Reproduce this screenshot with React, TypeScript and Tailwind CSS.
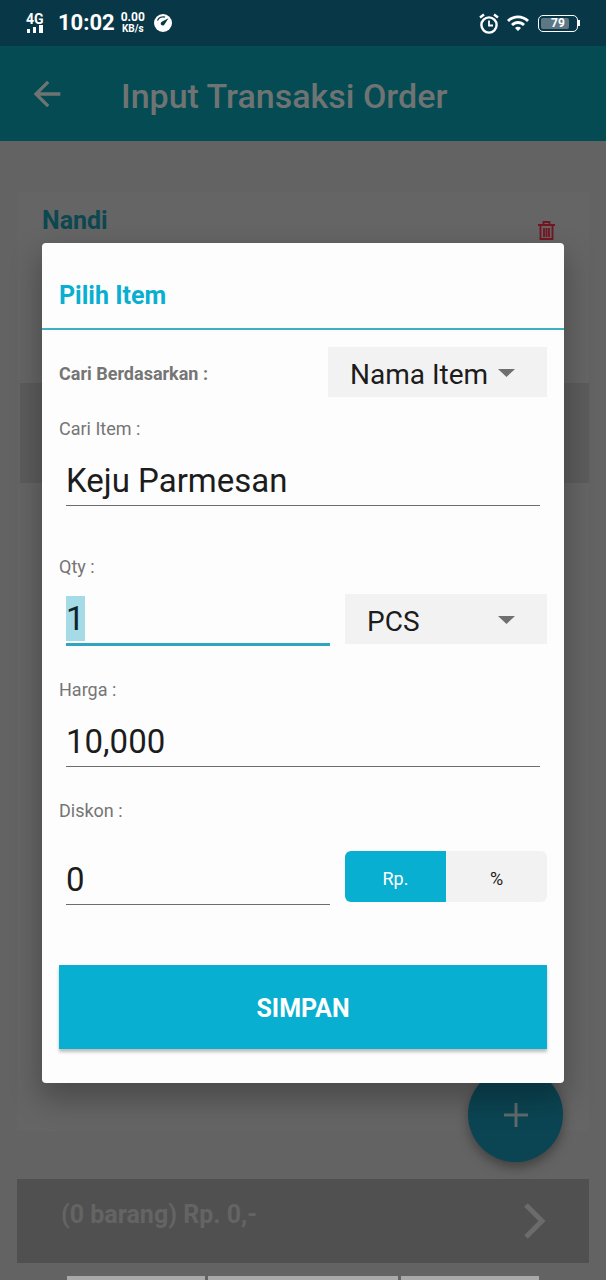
import { useEffect, useRef, useState } from "react";
import type { ReactNode } from "react";
import { MdArrowBack, MdWifi } from "react-icons/md";

function StatusBar() {
    return (
        <div className="flex h-[46px] items-center justify-between bg-[#083848] px-[26px] text-white">
            <div className="flex items-center">
                <div className="flex w-6 flex-col items-start">
                    <span className="text-[14px] font-bold leading-3">4G</span>
                    <svg width="18" height="8" viewBox="0 0 18 8" fill="currentColor">
                        <rect x="1" y="4" width="3" height="4" />
                        <rect x="7" y="2" width="3" height="6" />
                        <rect x="13" y="0" width="4" height="8" />
                    </svg>
                </div>
                <span className="ml-2 text-[22px] font-bold leading-7">10:02</span>
                <div className="ml-1.5 flex flex-col text-center font-bold">
                    <span className="text-[12px] leading-[11px]">0.00</span>
                    <span className="text-[10px] leading-[11px]">KB/s</span>
                </div>
                <svg className="ml-2" width="20" height="20" viewBox="0 0 20 20">
                    <circle cx="10" cy="10" r="9" fill="#fff" />
                    <path d="M4.5 7.5A6.2 6.2 0 0 1 12 4.2" fill="none" stroke="#083848" strokeWidth="1.3" />
                    <path d="M15.5 5.2 11.6 11.2A2 2 0 1 1 8.8 8.8Z" fill="#083848" />
                </svg>
            </div>
            <div className="flex items-center">
                <svg width="20" height="21" viewBox="0 0 20 21" fill="none" stroke="currentColor" strokeWidth="2.4">
                    <circle cx="10" cy="12" r="7.6" />
                    <path d="M1 4.5 5 1.5M19 4.5 15 1.5" />
                    <path d="M10 7.5V12.5H14" strokeWidth="1.8" />
                </svg>
                <MdWifi size={24} className="ml-[7px]" />
                <div className="ml-2 flex items-center">
                    <div className="relative flex h-[17px] w-10 items-center justify-center rounded-[5px] border border-white">
                        <div className="absolute inset-y-0.5 left-0.5 w-7 rounded-xs bg-[#5d7884]" />
                        <span className="relative text-[12px] font-bold leading-3">79</span>
                    </div>
                    <div className="h-1.5 w-0.5 bg-white" />
                </div>
            </div>
        </div>
    );
}

type FieldProps = { id: string; label: string; className: string; children: ReactNode };

function Field({ id, label, className, children }: FieldProps) {
    return (
        <div className={className}>
            <label htmlFor={id} className="block text-[18px] leading-6 text-[#757575]">{label}</label>
            {children}
        </div>
    );
}

const inputStyle =
    "block w-full min-w-0 bg-transparent pt-[17px] pb-0.5 text-[33px] leading-[45px] text-[#1c1c1c] outline-none rounded-none selection:bg-[#a5dbe6] selection:text-[#10242c]";

type DropdownProps = { id: string; label: string; options: string[]; className: string };

function Dropdown({ id, label, options, className }: DropdownProps) {
    return (
        <div className={`relative ${className}`}>
            <select
                id={id}
                aria-label={label}
                className="h-[50px] w-full appearance-none rounded-none bg-[#f2f2f2] pl-[22px] pt-1.5 text-[28px] leading-9 text-[#1c1c1c] outline-none"
            >
                {options.map((o) => (
                    <option key={o}>{o}</option>
                ))}
            </select>
            <svg className="pointer-events-none absolute right-8 top-[22px]" width="17" height="8" viewBox="0 0 17 8">
                <path d="M0 0H17L8.5 8Z" fill="#6f6f6f" />
            </svg>
        </div>
    );
}

function ItemDialog() {
    const qtyRef = useRef<HTMLInputElement>(null);
    const [unit, setUnit] = useState("Rp.");

    useEffect(() => {
        qtyRef.current?.focus();
        qtyRef.current?.select();
    }, []);

    return (
        <div
            role="dialog"
            aria-labelledby="dialog-title"
            className="w-full rounded-[4px] bg-[#fdfdfd] shadow-[0_14px_30px_2px_rgba(0,0,0,0.28)]"
        >
            <div className="border-b-2 border-[#3db1c4] px-[17px] pb-4 pt-[37px]">
                <h2 id="dialog-title" className="text-[25px] font-bold leading-8 text-[#08afd0]">Pilih Item</h2>
            </div>

            <form className="px-[17px] pb-[34px] pt-[17px]" onSubmit={(e) => e.preventDefault()}>
                <div className="flex items-center justify-between">
                    <label htmlFor="cari-by" className="pt-1 text-[18px] font-bold leading-6 text-[#757575]">Cari Berdasarkan :</label>
                    <Dropdown id="cari-by" label="Cari Berdasarkan" options={["Nama Item", "Kode Item"]} className="w-[219px]" />
                </div>

                <Field id="cari" label="Cari Item :" className="mt-5">
                    <div className="px-[7px]">
                        <input id="cari" defaultValue="Keju Parmesan" className={`${inputStyle} border-b border-[#6d6d6d]`} />
                    </div>
                </Field>

                <Field id="qty" label="Qty :" className="mt-[49px]">
                    <div className="flex items-end gap-[15px] pl-[7px]">
                        <input id="qty" ref={qtyRef} defaultValue="1" className={`${inputStyle} flex-1 border-b-3 border-[#2fa6bf]`} />
                        <Dropdown id="satuan" label="Satuan" options={["PCS", "BOX"]} className="mb-0.5 w-[202px]" />
                    </div>
                </Field>

                <Field id="harga" label="Harga :" className="mt-8">
                    <div className="px-[7px]">
                        <input id="harga" defaultValue="10,000" className={`${inputStyle} border-b border-[#6d6d6d]`} />
                    </div>
                </Field>

                <Field id="diskon" label="Diskon :" className="mt-8">
                    <div className="mt-[17px] flex items-end gap-[15px] pl-[7px]">
                        <input id="diskon" defaultValue="0" className={`${inputStyle} flex-1 border-b border-[#6d6d6d]`} />
                        <div className="mb-[3px] flex h-[51px] w-[202px] overflow-hidden rounded-[6px] bg-[#f2f2f2] text-[18px]">
                            {["Rp.", "%"].map((u) => (
                                <button
                                    key={u}
                                    type="button"
                                    onClick={() => setUnit(u)}
                                    className={unit === u ? "flex-1 bg-[#08afd0] pt-1 text-white" : "flex-1 pt-1 text-[#1c1c1c]"}
                                >
                                    {u}
                                </button>
                            ))}
                        </div>
                    </div>
                </Field>

                <button
                    type="submit"
                    className="mt-[60px] h-[84px] w-full bg-[#08afd0] pt-1 text-[25px] font-bold text-white shadow-[0_3px_3px_rgba(0,0,0,0.25)]"
                >
                    SIMPAN
                </button>
            </form>
        </div>
    );
}

export default function App() {
    return (
        <div className="relative flex min-h-screen flex-col overflow-hidden bg-[#636363] font-[Roboto,sans-serif]">
            <StatusBar />

            <header className="flex h-[95px] items-center bg-[#044b54] pl-[27px] pt-1 text-[#6f7473]">
                <button aria-label="Kembali">
                    <MdArrowBack size={40} className="-mt-1" />
                </button>
                <h1 className="ml-[54px] text-[34px] font-medium leading-10">Input Transaksi Order</h1>
            </header>

            <main className="flex flex-1 flex-col px-[17px] pt-[51px]">
                <section className="mb-12 flex-1 bg-[#656565]">
                    <div className="flex justify-between pl-[25px] pr-[34px] pt-[13px]">
                        <h2 className="text-[25px] font-bold leading-8 text-[#0d4750]">Nandi</h2>
                        <button aria-label="Hapus" className="mt-4">
                            <svg width="17" height="19" viewBox="0 0 17 19" fill="none" stroke="#761522" strokeWidth="1.8">
                                <path d="M0 4H17M5.5 4V1H11.5V4M2.5 4V18H14.5V4M6 7V16M8.5 7V16M11 7V16" />
                            </svg>
                        </button>
                    </div>
                    <div className="ml-[3px] mt-[143px] h-[100px] bg-[#5c5c5c]" />
                </section>

                <footer className="flex h-[84px] items-center justify-between bg-[#505050] pl-11 pr-[43px] text-[#646464]">
                    <p className="pb-3 text-[25px] font-bold leading-8">(0 barang) Rp. 0,-</p>
                    <svg width="24" height="36" viewBox="0 0 24 36" fill="none" stroke="#6b6b6b" strokeWidth="5">
                        <path d="M4 2 20 18 4 34" />
                    </svg>
                </footer>
            </main>

            <div className="mt-[13px] flex h-1 gap-[3px] px-[67px]">
                <div className="flex-[138] bg-[#a9a9a9]" />
                <div className="flex-[191] bg-[#a9a9a9]" />
                <div className="flex-[138] bg-[#a9a9a9]" />
            </div>

            <button
                aria-label="Tambah"
                className="absolute bottom-[118px] right-[43px] flex size-[95px] items-center justify-center rounded-full bg-[#0b4553] shadow-[0_5px_12px_rgba(0,0,0,0.35)]"
            >
                <svg width="24" height="24" viewBox="0 0 24 24" stroke="#5f6b6d" strokeWidth="3">
                    <path d="M12 0V24M0 12H24" />
                </svg>
            </button>

            <div className="absolute inset-x-0 bottom-0 top-[46px] flex items-center px-[42px]">
                <ItemDialog />
            </div>
        </div>
    );
}
